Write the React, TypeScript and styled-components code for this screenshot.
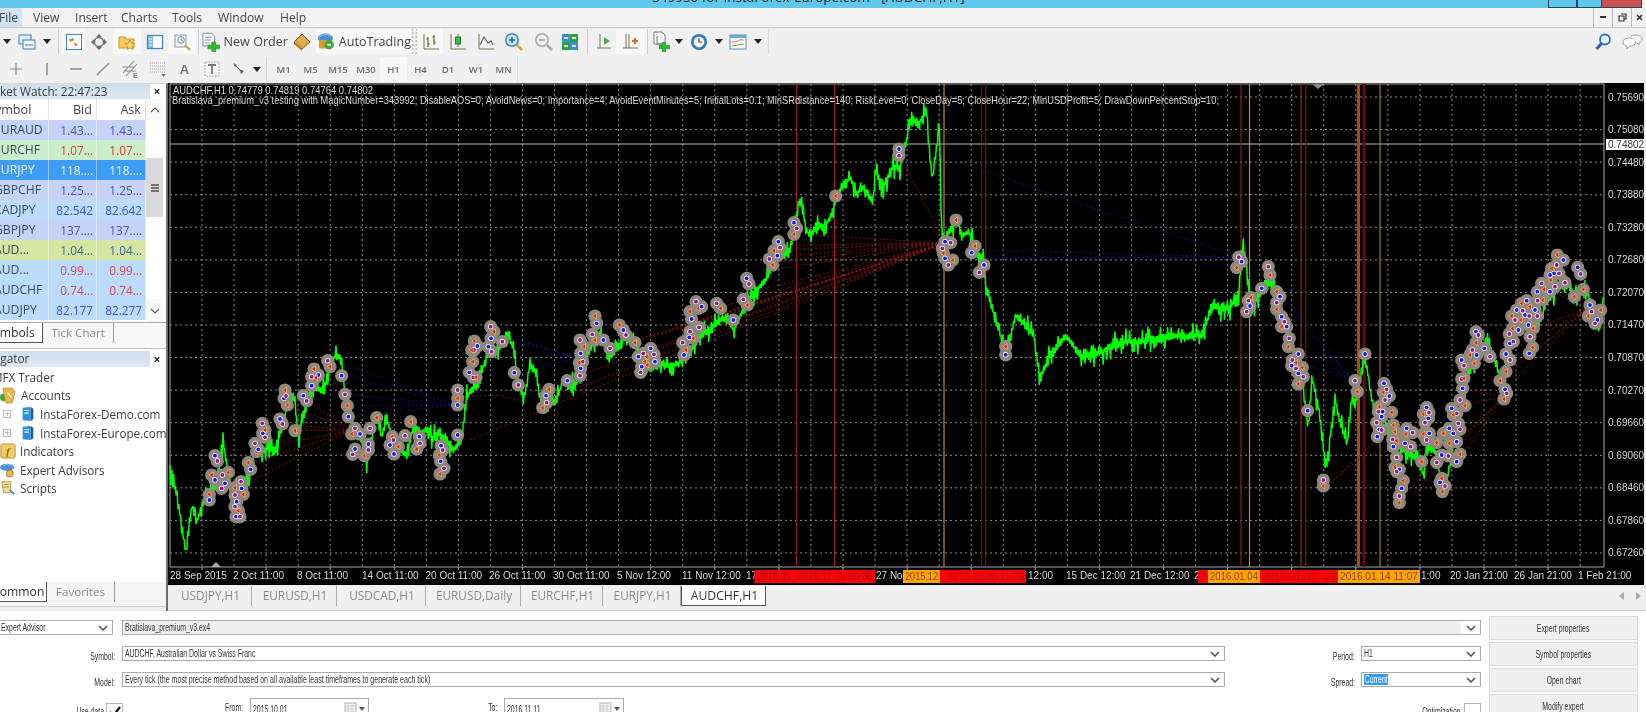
import React from "react";
import styled, { createGlobalStyle } from "styled-components";

const Global = createGlobalStyle`
  html, body { margin: 0; padding: 0; background: #fff; overflow: hidden; }
  #root { width: 1646px; height: 712px; }
  * { box-sizing: border-box; }
`;

const UI = `"Open Sans", "Noto Sans", sans-serif`;
const DLG = `"Liberation Sans", Arial, sans-serif`;

const Page = styled.div`
  width: 1646px; height: 712px; overflow: hidden; display: flex; flex-direction: column;
  font-family: ${UI}; color: #333; background: #f0f0f0; filter: blur(0.45px);
`;

/* ---------- title + menu ---------- */
const TitleBar = styled.div`
  height: 8px; flex: none; background: #5fc8ec; display: flex; overflow: hidden; padding-left: 652px;
`;
const TitleText = styled.div`
  font-size: 13.5px; line-height: 16px; margin-top: -11px; color: #1a1a1a; white-space: nowrap; flex: 1;
`;
const WinBtn = styled.div<{ $w: number; $red?: boolean }>`
  width: ${(p) => p.$w}px; height: 8px; background: ${(p) => (p.$red ? "#c75050" : "#5fc8ec")};
  border: 1px solid #22465a; border-top: none; border-left-width: ${(p) => (p.$red ? 0 : 1)}px;
`;
const WinEdge = styled.div`width: 4px; background: #f4f4f4;`;
const MenuBar = styled.div`
  height: 20px; flex: none; display: flex; align-items: center; font-size: 12.1px; color: #444;
  border-bottom: 1px solid #c6c6c6; background: #f2f2f2;
`;
const MenuItem = styled.div<{ $w: number }>`
  width: ${(p) => p.$w}px; height: 100%; line-height: 19px; white-space: nowrap;
`;
const FileLabel = styled.span`
  display: block; width: 22px; height: 100%; background: #cfe3f5; overflow: hidden; text-indent: -1px;
`;
const MdiGroup = styled.div`margin-left: auto; display: flex; height: 100%;`;
const MdiBtn = styled.div<{ $w: number }>`
  width: ${(p) => p.$w}px; border-right: 1px solid #b8b8b8; display: flex; align-items: center; justify-content: center;
  &:first-child { border-left: 1px solid #b8b8b8; }
  &:last-child { border-right: none; }
`;

/* ---------- toolbars ---------- */
const ToolRow = styled.div<{ $h: number }>`
  height: ${(p) => p.$h}px; flex: none; display: flex; align-items: center; background: #f0f0f0;
`;
const Tool = styled.div<{ $w: number; $on?: boolean }>`
  width: ${(p) => p.$w}px; height: 25px; flex: none; display: flex; align-items: center; justify-content: center;
  background: ${(p) => (p.$on ? "#f8f8f8" : "transparent")};
  font-size: 12.6px; color: #444; gap: 3px; white-space: nowrap;
`;
const Period = styled(Tool)`
  font-size: 9.5px; font-weight: 600; color: #6a6a6a; font-family: ${UI};
`;
const Sep = styled.div<{ $w: number }>`
  width: ${(p) => p.$w}px; height: 25px; flex: none; display: flex; justify-content: center;
  &::after { content: ""; width: 1px; background: #cfcfcf; height: 100%; }
`;
const Grip = styled.div`
  width: 7px; height: 25px; flex: none; margin: 0 0;
  border-left: 2px dotted #c0c0c0; border-right: 2px dotted #c0c0c0; transform: scaleX(.7);
`;
const RowEnd = styled.div`width: 1px; height: 25px; background: #dcdcdc;`;
const RightTools = styled.div`margin-left: auto; display: flex;`;
const DrawA = styled.span`
  font-family: ${DLG}; font-weight: 700; font-size: 13px; color: #777;
`;

/* ---------- main ---------- */
const Main = styled.div`height: 528px; flex: none; display: flex;`;
const Side = styled.div`
  width: 168px; flex: none; background: #fff; display: flex; flex-direction: column; overflow: hidden;
  border-right: 2px solid #6e6e6e; border-top: 1px solid #d8d8d8;
`;
const PanelTitle = styled.div<{ $indent: number; $h: number; $top?: number }>`
  height: ${(p) => p.$h}px; flex: none; display: flex; align-items: center; font-size: 11.8px; color: #3c3c3c; white-space: nowrap; overflow: hidden;
  margin-top: ${(p) => p.$top || 0}px;
  & > span:first-child {
    width: 150px; height: 100%; line-height: ${(p) => p.$h - 1}px; padding-left: 0;
    background: linear-gradient(#cfdfee, #dde8f2); text-indent: ${(p) => p.$indent}px; overflow: hidden;
  }
`;
const CloseX = styled.span`width: 14px; text-align: center; font-weight: 700; font-size: 12px; color: #222;`;
const WatchArea = styled.div`height: 224px; flex: none; display: flex; padding-right: 3px; border-bottom: 1px solid #a8a8a8;`;
const WatchTable = styled.div`width: 146px; flex: none; display: flex; flex-direction: column; overflow: hidden;`;
const WatchHead = styled.div`
  height: 21px; flex: none; display: grid; grid-template-columns: 49px 48px 49px; font-size: 12.6px; color: #444; line-height: 21px;
  span { border-right: 1px solid #e2e2e2; white-space: nowrap; }
  span:first-child { text-indent: -12px; overflow: hidden; }
  span:not(:first-child) { text-align: right; padding-right: 4px; }
`;
const WatchRow = styled.div<{ $bg: string; $fg: string; $sym?: string }>`
  height: 20px; flex: none; display: grid; grid-template-columns: 49px 48px 49px; font-size: 11.8px; line-height: 20px;
  background: ${(p) => p.$bg}; color: ${(p) => p.$fg};
  span { border-right: 1px solid rgba(255,255,255,.45); white-space: nowrap; }
  span:first-child { text-indent: -6px; overflow: hidden; color: ${(p) => p.$sym || "#3a4a5a"}; font-size: 12.2px; }
  span:not(:first-child) { text-align: right; padding-right: 3px; }
`;
const Scroll = styled.div`width: 17px; flex: none; display: flex; flex-direction: column; background: #fff;`;
const ScrollBtn = styled.div<{ $h: number; $end?: boolean }>`
  height: ${(p) => p.$h}px; flex: none; display: flex; align-items: center; justify-content: center; background: #f9f9f9;
  margin-top: ${(p) => (p.$end ? "auto" : "0")};
`;
const ScrollThumb = styled.div`
  height: 59px; margin-top: 38px; flex: none; background: #d9d9d9; display: flex; align-items: center; justify-content: center;
`;
const TabStrip = styled.div<{ $h: number }>`
  height: ${(p) => p.$h}px; flex: none; display: flex; align-items: flex-start; background: #f7f7f7; font-size: 11.6px; overflow: hidden;
  border-bottom: 1px solid #c4c4c4;
`;
const SideTab = styled.div<{ $w: number; $on?: boolean; $indent?: number }>`
  width: ${(p) => p.$w}px; height: 20px; flex: none; line-height: 19px; white-space: nowrap; overflow: hidden;
  text-indent: ${(p) => p.$indent || 0}px;
  text-align: ${(p) => (p.$on ? "left" : "center")};
  background: ${(p) => (p.$on ? "#fff" : "transparent")};
  color: ${(p) => (p.$on ? "#333" : "#8a8a8a")};
  border-right: 1px solid ${(p) => (p.$on ? "#555" : "#9a9a9a")};
  border-bottom: ${(p) => (p.$on ? "1px solid #555" : "none")};
  font-size: ${(p) => (p.$on ? 12.2 : 11.6)}px;
`;
const Tree = styled.div`flex: 1; padding-top: 0.5px; background: #fff; font-size: 11.7px; color: #3c3c3c; overflow: hidden;`;
const TreeRow = styled.div<{ $pad: number }>`
  height: 18.6px; display: flex; align-items: center; padding-left: ${(p) => p.$pad}px; gap: 4px; white-space: nowrap;
  svg { flex: none; }
`;
const TreePlus = styled.span`
  width: 8px; height: 8px; border: 1px solid #bbb; flex: none; margin-right: 5px;
  background: linear-gradient(#bbb,#bbb) center/4px 1px no-repeat, linear-gradient(#bbb,#bbb) center/1px 4px no-repeat;
`;
const BottomTabs = styled(TabStrip)`
  height: 25px; margin-top: 0; border-top: 0; background: #f5f5f5; margin-bottom: 4px; box-shadow: 0 4px 0 #f0f0f0;
  border-bottom: 1px solid #cfcfcf;
`;
const Clip7 = styled.span`margin-left: -8px;`;

const Right = styled.div`flex: 1; display: flex; flex-direction: column; min-width: 0;`;
const ChartBox = styled.div`height: 502px; flex: none; background: #000; display: flex; border-right: 2px solid #f0f0f0;`;
const ChartTabs = styled.div`
  height: 26px; flex: none; display: flex; align-items: flex-start; background: #f0f0f0; color: #8a8a8a;
  padding-top: 1px; border-bottom: 1px solid #c8c8c8;
`;
const ChartTab = styled.div<{ $w: number; $on?: boolean }>`
  width: ${(p) => p.$w}px; height: 20px; line-height: 19px; text-align: center; flex: none; white-space: nowrap; padding-left: 2px;
  background: ${(p) => (p.$on ? "#fff" : "transparent")}; color: ${(p) => (p.$on ? "#333" : "#8a8a8a")};
  border-right: 1px solid ${(p) => (p.$on ? "#555" : "#aaa")};
  border-left: ${(p) => (p.$on ? "1px solid #555" : "none")};
  border-bottom: ${(p) => (p.$on ? "1px solid #555" : "none")};
  font-size: ${(p) => (p.$on ? 12.2 : 11.8)}px;
`;
const TabNav = styled.div`margin-left: auto; display: flex; gap: 12px; padding: 6px 5px 0 0;`;

/* ---------- form ---------- */
const Form = styled.div`
  height: 101px; flex: none; background: #fff; display: grid; overflow: hidden; padding-top: 7px;
  grid-template-columns: 122px 1103px 136px 120px 8px 149px 8px;
  grid-auto-rows: 26px; font-family: ${DLG}; font-size: 10px; color: #333;
`;
const Squeeze = styled.span<{ $end?: boolean; $sx?: number }>`
  display: inline-block; transform: scaleX(${(p) => p.$sx || 0.69}); white-space: nowrap;
  transform-origin: ${(p) => (p.$end ? "right" : "left")} center;
`;
const Label = styled.div<{ $pad?: number }>`
  display: flex; justify-content: flex-end; align-items: center; padding-right: ${(p) => p.$pad ?? 7}px; height: 20px; padding-top: 4px; white-space: nowrap;
`;
const Combo = styled.div<{ $grey?: boolean; $span?: string; $w?: number; $left?: number }>`
  height: 15px; margin-top: 2px; border: 1px solid #aaa; display: flex; align-items: center; padding-left: 2px;
  grid-column: ${(p) => p.$span || "auto"}; background: #fff;
  width: ${(p) => (p.$w ? p.$w + "px" : "auto")};
  margin-left: ${(p) => p.$left || 0}px;
  & > div:first-child { flex: 1; height: 100%; display: flex; align-items: center; background: ${(p) => (p.$grey ? "#efefef" : "transparent")}; min-width: 0; overflow: hidden; margin: 0 0 0 -2px; padding-left: 2px; }
`;
const ChevBox = styled.div`width: 19px; flex: none; display: flex; justify-content: center;`;
const Selected = styled.span`
  background: #3399ff; color: #fff; display: inline-block; padding: 0 1px; transform: scaleX(.69); transform-origin: left center;
`;
const SideButton = styled.div`
  grid-column: 6; height: 24px; margin-top: -2px; background: #f0f0f0; border: 1px solid #dadada;
  display: flex; align-items: center; justify-content: center; font-size: 10px;
`;
const CenterSqueeze = styled.span`
  display: inline-block; transform: scaleX(.69); transform-origin: center; white-space: nowrap;
`;
const DateRow = styled.div`grid-column: 1 / 3; display: flex; align-items: flex-start; height: 26px;`;
const TextLabel = styled.div<{ $w: number; $top?: number }>`
  width: ${(p) => p.$w}px; flex: none; white-space: nowrap; padding-top: ${(p) => p.$top ?? 6}px; text-align: right;
`;
const Check = styled.div<{ $left: number }>`
  width: 17px; height: 17px; flex: none; border: 1px solid #b4b4b4; margin-top: 7px; margin-left: ${(p) => p.$left}px;
  display: flex; align-items: center; justify-content: center;
`;
const DateInput = styled.div<{ $w: number }>`
  width: ${(p) => p.$w}px; height: 22px; flex: none; border: 1px solid #aaa; display: flex; align-items: center; padding-left: 2px; margin: 2px 0 0 7px;
  & > span:first-child { flex: 1; }
`;
const OptCell = styled.div`grid-column: 3 / 5; display: flex; justify-content: flex-end; align-items: flex-start;`;

/* ---------- icons ---------- */
const Svg: React.FC<{ s?: number; children: React.ReactNode; vb?: string }> = ({ s = 18, children, vb = "0 0 18 18" }) => (
  <svg width={s} height={s} viewBox={vb}>{children}</svg>
);
const Drop = () => <svg width="8" height="5" viewBox="0 0 8 5"><path d="M0 0h8L4 5z" fill="#222" /></svg>;
const Chev = () => <svg width="10" height="6" viewBox="0 0 10 6"><path d="M1 1l4 4 4-4" fill="none" stroke="#555" strokeWidth="1.6" /></svg>;
const NewChartIco = () => (
  <Svg><rect x="1" y="2" width="12" height="9" fill="#dcecf8" stroke="#4a7fb0" /><rect x="5" y="7" width="12" height="9" fill="#eef6fc" stroke="#4a7fb0" /><path d="M7 12h8" stroke="#4a7fb0" /></Svg>
);
const MwIco = () => (
  <Svg><rect x="1.5" y="1.5" width="15" height="15" fill="#fff" stroke="#3f86c6" /><path d="M4 5l3 3-2 1zM9 9l4 3-3 1z" fill="#e06a20" /><path d="M5 7l3-2 1 3z" fill="#2aa02a" /></Svg>
);
const NavIco = () => (
  <Svg><path d="M9 1l3 3H6zM9 17l3-3H6zM1 9l3-3v6zM17 9l-3-3v6z" fill="#6f6f6f" /><circle cx="9" cy="9" r="4.6" fill="none" stroke="#6f6f6f" strokeWidth="1.5" /></Svg>
);
const FolderIco = () => (
  <Svg><path d="M1 4h6l1 2h8v9H1z" fill="#f5c95a" stroke="#c79a2a" /><path d="M12 7l1.6 3.2 3.4.5-2.5 2.4.6 3.4-3.1-1.6-3 1.6.6-3.4L7 10.7l3.4-.5z" fill="#f2d66a" stroke="#b08a20" strokeWidth=".7" /></Svg>
);
const PanelIco = () => (
  <Svg><rect x="1.5" y="2.5" width="15" height="13" fill="#fff" stroke="#3f86c6" strokeWidth="1.3" /><rect x="2" y="3" width="5" height="12" fill="#7fb6e4" /><path d="M3 6h3M3 9h3M3 12h3" stroke="#fff" /></Svg>
);
const TesterIco = () => (
  <Svg><rect x="2" y="2" width="11" height="12" fill="#eef2f6" stroke="#8a9cb0" /><circle cx="8" cy="7" r="3.3" fill="#fff" stroke="#6a8aa8" /><path d="M8 5v2l2 1" stroke="#6a8aa8" fill="none" /><path d="M12 12l5 5" stroke="#d8a030" strokeWidth="2.2" /></Svg>
);
const OrderIco = () => (
  <Svg s={20} vb="0 0 20 20"><path d="M2 1h9l3 3v10H2z" fill="#fff" stroke="#7a8a9a" /><path d="M4 5h7M4 8h6M4 11h5" stroke="#7a8a9a" /><path d="M11 10h4v3h4v4h-4v3h-4v-3H7v-4h4z" fill="#2fb52f" stroke="#1a8a1a" strokeWidth=".5" /></Svg>
);
const GoldIco = () => (
  <Svg s={20} vb="0 0 20 20"><path d="M2 10l8-8 8 8-8 7z" fill="#e0a030" stroke="#8a6a30" /><path d="M5 9l5-5 6 6-6 5z" fill="#d8b060" /><path d="M2 10l8 7v2L2 12z" fill="#a87a28" /></Svg>
);
const AutoIco = () => (
  <Svg s={21} vb="0 0 21 21"><ellipse cx="10" cy="7" rx="8" ry="5" fill="#4a8ed0" /><path d="M3 7c2-4 9-5 13-2" stroke="#9ccaf0" fill="none" /><rect x="3" y="9" width="14" height="9" rx="2" fill="#d89a3a" /><circle cx="14" cy="14" r="5" fill="#3aa83a" /><path d="M12 14h4" stroke="#fff" strokeWidth="2" /></Svg>
);
const BarsIco = () => (
  <Svg><path d="M2 1v15h15" fill="none" stroke="#7a6f50" /><path d="M6 4v10M4.5 6H6M6 11h1.5M12 2v10M10.5 4H12M12 9h1.5" stroke="#5a7a30" strokeWidth="1.3" /></Svg>
);
const CandleIco = () => (
  <Svg><path d="M2 1v15h15" fill="none" stroke="#7a6f50" /><path d="M9 1v13" stroke="#666" /><rect x="6.5" y="4" width="5" height="7" fill="#3ac03a" stroke="#2a7a2a" /></Svg>
);
const LineIco = () => (
  <Svg><path d="M2 1v15h15" fill="none" stroke="#7a6f50" /><path d="M3 12l4-8 4 6 3-2 2 4" fill="none" stroke="#5a6a7a" strokeWidth="1.2" /></Svg>
);
const ZoomIco: React.FC<{ plus?: boolean }> = ({ plus }) => (
  <Svg s={20} vb="0 0 20 20">
    <circle cx="8" cy="8" r="6.2" fill={plus ? "#cfe6f8" : "#f0f0f0"} stroke={plus ? "#3f86c6" : "#a8a8a8"} strokeWidth="1.6" />
    <path d="M5 8h6" stroke={plus ? "#2a6fb0" : "#a0a0a0"} strokeWidth="1.6" />
    {plus && <path d="M8 5v6" stroke="#2a6fb0" strokeWidth="1.6" />}
    <path d="M13 13l5 5" stroke={plus ? "#d8a838" : "#a8a8a8"} strokeWidth="2.6" />
  </Svg>
);
const TileIco = () => (
  <Svg><rect x="1" y="1" width="8" height="8" fill="#3d8fd0" /><rect x="9" y="1" width="8" height="8" fill="#2f9f4a" /><rect x="1" y="9" width="8" height="8" fill="#2f9f4a" /><rect x="9" y="9" width="8" height="8" fill="#3d8fd0" /><path d="M3 5h4M11 5h4M3 13h4M11 13h4" stroke="#fff" strokeWidth="1.6" /></Svg>
);
const ShiftIco = () => (
  <Svg><path d="M5 1v14M2 15h14" stroke="#7a6f50" fill="none" /><path d="M9 4l6 4-6 4z" fill="#4ab04a" /></Svg>
);
const ScrollIco = () => (
  <Svg><path d="M4 1v14M7 1v14M1 15h15" stroke="#7a6f50" fill="none" /><path d="M10 8h6M13 5v6" stroke="#e06a20" strokeWidth="2" /></Svg>
);
const NewPlusIco = () => (
  <Svg s={21} vb="0 0 21 21"><path d="M2 1h8l3 3v9H2z" fill="#fff" stroke="#777" /><path d="M5 5v8M5 13h6" stroke="#777" /><path d="M10 11h4v3h4v4h-4v3h-4v-3H7v-4h3z" fill="#2fb52f" /></Svg>
);
const ClockIco = () => (
  <Svg><circle cx="9" cy="9" r="8" fill="#2a78c0" /><circle cx="9" cy="9" r="5.4" fill="#f4f4f4" /><path d="M9 5.5V9h3" stroke="#444" strokeWidth="1.2" fill="none" /></Svg>
);
const TemplateIco = () => (
  <Svg><rect x="1" y="2" width="16" height="14" fill="#fff" stroke="#4a8ac0" /><rect x="1" y="2" width="16" height="3" fill="#6fa8d8" /><path d="M3 10c2-3 4 0 6-2s4-1 6-1" stroke="#d06a30" fill="none" /><path d="M3 13c2-1 4 0 6-1s4 0 6-1" stroke="#50a050" fill="none" /></Svg>
);
const SearchIco = () => (
  <Svg><circle cx="11" cy="6.5" r="5" fill="#e6f1fb" stroke="#2f6fc0" strokeWidth="1.8" /><path d="M7.5 10.5L2.5 16" stroke="#2f5fa8" strokeWidth="3" /></Svg>
);
const ChatIco = () => (
  <Svg s={22} vb="0 0 22 18"><path d="M2 9c0-3 3-4 7-4s6 1 6 4-3 4-6 4l-3 3v-3c-2 0-4-1-4-4z" fill="#f8f8f8" stroke="#a0a0a0" /><path d="M10 3c3-2 11-1 11 3 0 2-1 3-3 4v2l-2-2" fill="#f4f4f4" stroke="#a0a0a0" /></Svg>
);
const LineSym: React.FC<{ d: string; w?: number }> = ({ d, w = 1.2 }) => (
  <Svg><path d={d} stroke="#8a8a8a" strokeWidth={w} fill="none" /></Svg>
);
const FiboIco = () => (
  <Svg s={20} vb="0 0 20 20"><path d="M3 14L14 2M6 17L17 5M2 8h13M4 12h12" stroke="#8a8a8a" strokeWidth="1.1" /><text x="13" y="19" fontSize="7" fontFamily={DLG} fontWeight="700" fill="#777">E</text></Svg>
);
const GridIco = () => (
  <Svg><path d="M1 3h16M1 6h16M1 9h16M1 12h16" stroke="#a0a0a0" strokeDasharray="1 1" /><path d="M12 14h5l-2.500 3z" fill="#777" /></Svg>
);
const ArrowsIco = () => (
  <Svg><path d="M3 3l4 2-2 2zM9 9l5 2-3 3z" fill="#666" /><path d="M6 6l4 4" stroke="#666" /></Svg>
);
const TextIco = () => (
  <Svg><rect x="2" y="2" width="14" height="14" fill="#f6f6f6" stroke="#a8a8a8" strokeDasharray="2 1" /><path d="M5 5h8M9 5v9" stroke="#777" strokeWidth="1.8" /></Svg>
);
const AccountsIco = () => (
  <Svg s={17}><circle cx="4" cy="11" r="4" fill="#3ca83c" /><path d="M3 1h10l3 4-3 12H6z" fill="#e8b94a" stroke="#a8802a" strokeWidth=".6" /><path d="M8 6l4 5" stroke="#fff" strokeWidth="1.4" /></Svg>
);
const ServerIco = () => (
  <Svg s={16}><path d="M3 2l9-1v16l-9-1z" fill="#2f8fdc" /><path d="M12 1l3 2v12l-3 2z" fill="#1a5f9e" /><path d="M5 5h5M5 8h5" stroke="#dff" strokeWidth="1.2" /></Svg>
);
const IndIco = () => (
  <Svg s={16}><rect x="1" y="1" width="16" height="16" rx="2" fill="#f0cd6a" stroke="#b08a2a" /><text x="7" y="14" fontSize="12" fontFamily="Liberation Serif" fontStyle="italic" fontWeight="700" fill="#9a6a10">f</text></Svg>
);
const ExpertIco = () => (
  <Svg s={16}><ellipse cx="8" cy="6" rx="8" ry="4" fill="#4a8ed0" /><path d="M3 5c3-3 8-3 11 0" stroke="#9ccaf0" fill="none" /><circle cx="11" cy="13" r="4" fill="#e8b94a" stroke="#a8802a" /></Svg>
);
const ScriptIco = () => (
  <Svg s={16}><path d="M2 2h10v12H4z" fill="#f3dd9a" stroke="#a8903a" /><path d="M4 5h6M4 8h6" stroke="#a8903a" /><path d="M11 11l5 5" stroke="#5a8ac0" strokeWidth="2" /></Svg>
);
const CalIco = () => (
  <svg width="24" height="14" viewBox="0 0 24 14"><rect x="1" y="1" width="11" height="12" fill="#f4f4f4" stroke="#b4b4b4" /><path d="M1 4h11M1 7h11M1 10h11M4 1v12M8 1v12" stroke="#cfcfcf" /><path d="M15 5h6l-3 4z" fill="#555" /></svg>
);
const CheckMark = () => (
  <svg width="12" height="11" viewBox="0 0 12 11"><path d="M1 6l3 4 7-9" stroke="#111" strokeWidth="2.2" fill="none" /></svg>
);
const GripIco = () => (
  <svg width="8" height="8" viewBox="0 0 8 8"><path d="M0 1h8M0 4h8M0 7h8" stroke="#555" strokeWidth="1.4" /></svg>
);
const Up = () => <svg width="10" height="6" viewBox="0 0 10 6"><path d="M1 5l4-4 4 4" fill="none" stroke="#555" strokeWidth="1.1" /></svg>;
const Down = () => <svg width="10" height="6" viewBox="0 0 10 6"><path d="M1 1l4 4 4-4" fill="none" stroke="#555" strokeWidth="1.1" /></svg>;

/* ---------- chart data (page pixels) ---------- */
const K = 1 / 0.9526;
const ov = (a: number[][]) => a.map(([x, y]) => [x * K, y * K]);
const at = (ox: number, oy: number) => (a: number[][]) => a.map(([x, y]) => [ox + x / 3, oy + y / 3]);
const z9 = at(160, 300);
const z10 = at(700, 90);
const zA = at(1240, 230);
const zB = at(460, 240);

const pathPts: number[][] = [
  [170, 468], [178, 500], [186, 553], [192, 505], [196, 522], [205, 500], [210, 490], [218, 476], [223, 441], [230, 482], [236, 520], [240, 490],
  ...z9([[265, 530], [285, 460], [330, 440], [345, 460], [375, 350], [385, 270], [405, 300], [415, 420], [430, 350], [445, 290], [465, 260], [490, 270], [525, 165], [545, 180], [555, 280], [575, 360], [600, 410], [620, 480], [650, 340], [665, 410], [680, 350], [695, 410], [740, 470], [760, 380], [790, 400], [800, 380], [815, 420], [840, 400], [880, 450]]),
  ...zB([[5, 600], [20, 470], [50, 430], [85, 340], [125, 320], [140, 280], [160, 320], [170, 400], [190, 480], [210, 380], [225, 390], [240, 470], [270, 480], [285, 490], [310, 420], [345, 440], [385, 330], [420, 280], [450, 350], [490, 300], [520, 290], [560, 390], [600, 370], [640, 380], [680, 350], [720, 290], [770, 250], [800, 230], [820, 270], [860, 190], [890, 150]]),
  ...z10([[205, 560], [215, 520], [270, 480], [295, 345], [305, 330], [315, 410], [330, 440], [350, 400], [375, 415], [400, 355], [410, 320], [430, 285], [450, 265], [470, 310], [490, 290], [520, 340], [525, 245], [550, 290], [580, 230], [600, 235], [620, 150], [635, 70], [650, 110], [680, 60], [690, 210], [698, 260], [718, 110], [723, 350], [728, 460], [770, 390], [785, 440], [805, 425], [825, 470], [850, 510], [858, 590]]),
  ...ov([[950, 310], [958, 335], [968, 300], [985, 320], [990, 360], [1000, 340], [1015, 320], [1030, 340], [1050, 335], [1070, 325], [1090, 325], [1120, 320], [1145, 320], [1155, 290], [1170, 295], [1180, 280]]),
  ...zA([[10, 30], [25, 160], [30, 250], [60, 190], [80, 150], [100, 160], [125, 250], [150, 320], [175, 400], [190, 480], [205, 600], [215, 440], [235, 530], [250, 650], [258, 720], [272, 610], [285, 500], [300, 580], [322, 640], [335, 500], [345, 530], [375, 380], [395, 500], [415, 620], [430, 560], [455, 620], [490, 660], [530, 680], [550, 730], [560, 640], [590, 670], [610, 800], [630, 700], [650, 600], [670, 480], [700, 400], [745, 330], [770, 410], [790, 460], [810, 320], [860, 270], [900, 280], [920, 220], [950, 170], [985, 165], [1000, 200], [1040, 180], [1060, 230], [1078, 310], [1092, 210]]),
];

let seed = 12345;
const rnd = () => { seed = (seed * 1103515245 + 12345) & 0x7fffffff; return seed / 0x7fffffff; };
const buildLine = () => {
  const out: string[] = [];
  let sign = 1;
  for (let i = 0; i < pathPts.length - 1; i++) {
    const [x0, y0] = pathPts[i]; const [x1, y1] = pathPts[i + 1];
    const n = Math.max(1, Math.round((x1 - x0) / 0.9));
    for (let j = 0; j < n; j++) {
      const t = j / n;
      const x = x0 + (x1 - x0) * t; const y = y0 + (y1 - y0) * t;
      sign = -sign;
      const a = sign * (1 + rnd() * 3 + Math.pow(rnd(), 4) * 11);
      out.push(`${x.toFixed(1)},${(y + a).toFixed(1)}`);
    }
  }
  return out.join(" ");
};
const lineStr = buildLine();

const markers: number[][] = [
  ...z9([[165, 467], [172, 483], [155, 525], [165, 540], [187, 525], [205, 517], [195, 550], [185, 565], [148, 583], [148, 600], [243, 545], [225, 563], [245, 565], [225, 585], [250, 583], [230, 605], [225, 620], [235, 632], [228, 650], [240, 650], [265, 488], [272, 508], [285, 430], [290, 455], [295, 448], [307, 370], [315, 390], [308, 400], [315, 412], [375, 270], [372, 295], [378, 288], [382, 315], [360, 357], [367, 372], [405, 392], [430, 287], [440, 303], [462, 207], [475, 225], [455, 230], [468, 233], [455, 257], [503, 182], [510, 200], [545, 227], [555, 283], [562, 317], [565, 350], [585, 385], [575, 402], [600, 402], [630, 385], [650, 353], [585, 447], [578, 463], [613, 467], [625, 432], [625, 450], [697, 410], [690, 435], [700, 420], [715, 440], [702, 462], [735, 407], [752, 365], [778, 410], [780, 430], [770, 447], [843, 437], [848, 450], [838, 465], [842, 484], [852, 505], [840, 522], [893, 405], [893, 270], [893, 295], [893, 315]]),
  ...zB([[92, 260], [102, 275], [93, 295], [127, 305], [43, 303], [52, 318], [42, 330], [35, 330], [85, 320], [95, 335], [38, 365], [28, 397], [40, 412], [48, 412], [163, 398], [175, 435], [267, 448], [258, 467], [260, 488], [248, 503], [322, 422], [360, 300], [372, 320], [362, 340], [368, 365], [358, 368], [362, 385], [360, 407], [405, 228], [410, 250], [397, 283], [405, 300], [430, 300], [450, 325], [478, 255], [490, 270], [498, 285], [525, 308], [535, 350], [550, 340], [560, 350], [572, 325], [582, 343], [555, 365], [545, 380], [542, 397], [562, 375], [585, 365], [668, 308], [678, 330], [672, 345], [690, 275], [700, 295], [688, 292], [717, 262], [690, 215], [695, 237], [708, 185], [715, 205], [725, 200], [770, 190], [782, 205], [820, 240], [850, 178], [862, 195]]),
  ...z10([[597, 177], [597, 197], [407, 318], [282, 398], [290, 415], [282, 433], [235, 455], [240, 473], [222, 482], [232, 497], [208, 507], [218, 525], [140, 565], [147, 582], [768, 390], [735, 455], [752, 458], [825, 468], [815, 488], [727, 475], [730, 490], [735, 505], [745, 525], [758, 510], [852, 525], [838, 547]]),
  ...ov([[958, 330], [958, 338], [1180, 245], [1178, 255]]),
  ...zA([[5, 95], [85, 110], [90, 135], [65, 175], [25, 212], [33, 203], [30, 228], [20, 245], [110, 185], [120, 200], [110, 218], [110, 238], [125, 260], [133, 275], [125, 290], [140, 290], [148, 325], [145, 350], [175, 372], [157, 390], [168, 398], [155, 407], [168, 415], [187, 412], [175, 430], [190, 440], [175, 462], [203, 542], [250, 750], [250, 768], [375, 372], [345, 452], [352, 485], [432, 460], [440, 478], [430, 487], [448, 498], [435, 510], [418, 530], [428, 545], [415, 545], [455, 547], [425, 560], [410, 578], [460, 585], [418, 598], [425, 600], [465, 605], [412, 620], [458, 628], [470, 632], [460, 650], [470, 682], [465, 712], [478, 718], [470, 725], [490, 752], [485, 775], [478, 798], [478, 818], [500, 595], [518, 608], [497, 612], [495, 640], [512, 650], [545, 695], [560, 532], [567, 548], [550, 552], [565, 565], [555, 578], [550, 612], [568, 610], [560, 630], [590, 638], [605, 675], [590, 697], [605, 745], [600, 757], [615, 768], [607, 785], [635, 535], [650, 550], [640, 555], [628, 595], [655, 580], [610, 610], [640, 610], [660, 598], [628, 640], [650, 635], [625, 678], [660, 672], [650, 695], [660, 510], [675, 527], [668, 475], [665, 447], [672, 445], [665, 390], [697, 360], [690, 375], [710, 375], [672, 407], [703, 400], [708, 305], [715, 315], [708, 338], [733, 355], [750, 380], [780, 452], [795, 478], [800, 490], [792, 507], [798, 372], [810, 390], [798, 425], [810, 340], [808, 312], [818, 295], [835, 300], [820, 335], [815, 258], [830, 240], [848, 242], [845, 220], [860, 212], [825, 270], [842, 270], [855, 255], [868, 258], [870, 230], [885, 240], [892, 258], [880, 295], [865, 285], [870, 320], [878, 352], [868, 370], [893, 212], [908, 210], [892, 185], [905, 160], [912, 178], [930, 185], [945, 170], [932, 150], [942, 130], [957, 130], [935, 115], [930, 135], [950, 105], [952, 75], [970, 90], [975, 158], [1003, 200], [1013, 112], [1022, 132], [1030, 178], [1050, 225], [1055, 245], [1045, 258], [1072, 270], [1065, 280], [1082, 240]]),
];

const fan = (o: number[], ts: number[][]) => ts.map((t) => [o[0], o[1], t[0], t[1]]);
const redFans = [
  ...fan([352, 430], z9([[270, 545], [275, 490], [300, 445], [380, 315], [440, 305], [510, 200], [370, 372], [415, 392]])),
  ...fan([945, 243], [[810, 235], [795, 245], [780, 250], [770, 257], [770, 270], [775, 262], [620, 345], [640, 340], [660, 335], [700, 320], [740, 295], [905, 165], [710, 310], [680, 330], [638, 357], [540, 403], [470, 440], [525, 395]]),
  ...fan([1585, 310], [[1557, 293], [1537, 327], [1533, 340], [1527, 357], [1510, 372], [1500, 395]]),
  ...fan([1503, 397], [[1470, 390], [1465, 405], [1470, 430], [1463, 455], [1413, 495], [1425, 475]]),
  ...fan([1330, 483], [[1380, 437], [1370, 450]]),
  ...fan([498, 395], zB([[0, 470], [180, 480]])),
];
const blueFans = [
  ...fan([458, 405], z9([[545, 190], [545, 227], [555, 283], [562, 317], [565, 350]])),
  ...fan([1240, 257], [[985, 258], [965, 165], [975, 250], [1000, 258]]),
  ...fan([1353, 380], [[1283, 297], [1290, 310], [1297, 330], [1303, 353], [1303, 363]]),
  ...fan([580, 358], [[503, 337], [517, 340], [547, 353], [513, 373]]),
  ...fan([673, 348], [[640, 348]]),
];
const vLines: [number, string, number][] = [
  [796.7, "#a02020", 1.2], [834.7, "#b02020", 1.2], [944, "#c08a20", 1.2], [981.7, "#6a1010", 1.2], [985.7, "#7a1010", 1.2],
  [1241, "#8a2010", 1.2], [1249.5, "#c08a20", 1.2], [1301, "#a02020", 1.2], [1305.700, "#6a1010", 1.4], [1358.500, "#a84a14", 3], [1364, "#5a1010", 3], [1380, "#9a7a20", 1.2],
];
const priceLabels = ["0.75690", "0.75080", "0.74480", "0.73880", "0.73280", "0.72680", "0.72070", "0.71470", "0.70870", "0.70270", "0.69660", "0.69060", "0.68460", "0.67860", "0.67260"];
const dateLabels: [number, string][] = [
  [170, "28 Sep 2015"], [233, "2 Oct 11:00"], [297, "8 Oct 11:00"], [362, "14 Oct 11:00"], [425.5, "20 Oct 11:00"], [489, "26 Oct 11:00"], [553, "30 Oct 11:00"], [617, "5 Nov 12:00"], [682, "11 Nov 12:00"], [746, "17"], [876, "27 Nov"], [1028, "12:00"], [1066, "15 Dec 12:00"], [1130, "21 Dec 12:00"], [1194, "2"], [1421, "1:00"], [1450, "20 Jan 21:00"], [1514, "26 Jan 21:00"], [1578, "1 Feb 21:00"],
];
const boxes: [number, number, string, string, string][] = [
  [754.5, 120.5, "#ff0000", "#a80808", "2015.11  2015.11.25 00:38"],
  [903, 37, "#ffa500", "#904000", "2015.12"],
  [940, 86, "#ff0000", "#a80808", "  2015.12.08 11:29"],
  [1198, 10, "#ff0000", "#a80808", "2"],
  [1208, 52, "#ffa500", "#904000", "2016.01.04"],
  [1260, 58, "#ff0000", "#a80808", "2016.01.07"],
  [1318, 20, "#ff0000", "#a80808", "  20"],
  [1338, 82, "#ffa500", "#904000", "2016.01.14 11:07"],
];

const PX0 = 170, PX1 = 1604, PY0 = 84, PY1 = 567;
const gridX: number[] = []; for (let x = 202; x < PX1; x += 32.05) gridX.push(x);
const gridY = priceLabels.map((_, i) => 97 + 32.57 * i);

const ChartSvg = () => (
  <svg width="1476" height="502" viewBox="168 83 1476 502" fontFamily={DLG} fontSize="10">
    <rect x="168" y="83" width="1476" height="502" fill="#000" />
    <g stroke="#8c8c8c" strokeWidth="1" strokeDasharray="2 3">
      {gridX.map((x) => <line key={x} x1={x} y1={PY0} x2={x} y2={PY1} />)}
      {gridY.map((y) => <line key={y} x1={PX0} y1={y} x2={PX1} y2={y} />)}
    </g>
    <rect x={PX0} y={PY0} width={PX1 - PX0} height={PY1 - PY0} fill="none" stroke="#a8a8a8" />
    <line x1={PX0} y1="144" x2={PX1} y2="144" stroke="#b8b8b8" />
    {vLines.map(([x, c, w]) => <line key={x} x1={x} y1={PY0} x2={x} y2={PY1} stroke={c} strokeWidth={w} />)}
    <g strokeWidth=".9" strokeDasharray="2 2" fill="none">
      {blueFans.map((l, i) => <line key={i} x1={l[0]} y1={l[1]} x2={l[2]} y2={l[3]} stroke="#10107a" />)}
      {redFans.map((l, i) => <line key={i} x1={l[0]} y1={l[1]} x2={l[2]} y2={l[3]} stroke="#8a1010" />)}
    </g>
    <polyline points={lineStr} fill="none" stroke="#00ff00" strokeWidth="1.5" strokeLinejoin="bevel" />
    <g>{markers.map((m, i) => <circle key={i} cx={m[0]} cy={m[1]} r="6.6" fill="#8f877b" />)}</g>
    <g>
      {markers.map((m, i) => {
        const k = i % 3;
        const [x, y] = m;
        if (k === 2) return <path key={i} d={`M${x - 2.500} ${y}l4-3v6z`} fill="#e02010" stroke="#f8e080" strokeWidth=".6" />;
        return (
          <g key={i}>
            <circle cx={x} cy={y} r="2.7" fill="#f4f4f4" />
            <circle cx={x} cy={y} r="1.9" fill={k === 0 ? "#1414f0" : "#8a1a8a"} />
          </g>
        );
      })}
    </g>
    <path d="M211 567l5-5 5 5z" fill="#a8a8b8" />
    <path d="M1312 84h12l-6 5z" fill="#8a8a9a" />
    {gridX.filter((_, i) => i % 2 === 0).map((x) => <line key={x} x1={x} y1={PY1} x2={x} y2={PY1 + 3} stroke="#a8a8a8" />)}
    <g fill="#d8d8d8">
      <text x="173" y="94" fontSize="10.2" textLength="200" lengthAdjust="spacingAndGlyphs">AUDCHF,H1  0.74779 0.74819 0.74764 0.74802</text>
      <text x="172" y="104" fontSize="10.2" textLength="1047" lengthAdjust="spacingAndGlyphs">Bratislava_premium_v3 testing with MagicNumber=343992; DisableAOS=0; AvoidNews=0; Importance=4; AvoidEventMinutes=5; InitialLots=0.1; MinSRdistance=140; RiskLevel=0; CloseDay=5; CloseHour=22; MinUSDProfit=5; DrawDownPercentStop=10;</text>
      {priceLabels.map((t, i) => <text key={t} x="1608" y={gridY[i] + 3.5} fontSize="10">{t}</text>)}
      {dateLabels.map(([x, t]) => <text key={t} x={x} y="579" fontSize="10">{t}</text>)}
    </g>
    <rect x="1606" y="139" width="38" height="11" fill="#fff" />
    <text x="1608" y="148" fontSize="10" fill="#333">0.74802</text>
    {boxes.map(([x, w, bg, fg, t]) => (
      <g key={t + x}>
        <rect x={x} y="570" width={w} height="13" fill={bg} />
        <text x={x + 2} y="579.500" fontSize="10" fill={fg} xmlSpace="preserve" {...(t.length > 6 ? { textLength: w - 4, lengthAdjust: "spacingAndGlyphs" as const } : {})}>{t}</text>
      </g>
    ))}
  </svg>
);

type Row = { sym: string; bid: string; ask: string; bg: string; fg: string; symFg?: string };
const B = "#3f4fd8", R = "#e2405a";
const rows: Row[] = [
  { sym: "EURAUD", bid: "1.43...", ask: "1.43...", bg: "#c6d3f6", fg: B },
  { sym: "EURCHF", bid: "1.07...", ask: "1.07...", bg: "#cbeeca", fg: "#e03a30" },
  { sym: "EURJPY", bid: "118....", ask: "118....", bg: "#3d9cf6", fg: "#e8f4ff", symFg: "#e8f4ff" },
  { sym: "GBPCHF", bid: "1.25...", ask: "1.25...", bg: "#c6d3f6", fg: B },
  { sym: "CADJPY", bid: "82.542", ask: "82.642", bg: "#bbdcfb", fg: B },
  { sym: "GBPJPY", bid: "137....", ask: "137....", bg: "#c6d3f6", fg: B },
  { sym: "AUD...", bid: "1.04...", ask: "1.04...", bg: "#d4e6a2", fg: "#3d6a8a" },
  { sym: "AUD...", bid: "0.99...", ask: "0.99...", bg: "#bbdcfb", fg: R },
  { sym: "AUDCHF", bid: "0.74...", ask: "0.74...", bg: "#bbdcfb", fg: R },
  { sym: "AUDJPY", bid: "82.177", ask: "82.277", bg: "#bbdcfb", fg: B },
];

const tabs: [string, number][] = [["USDJPY,H1", 84], ["EURUSD,H1", 85], ["USDCAD,H1", 89], ["EURUSD,Daily", 95], ["EURCHF,H1", 82], ["EURJPY,H1", 78]];

export default function App() {
  return (
    <Page>
      <Global />
      <TitleBar>
        <TitleText>349950 for InstaForex-Europe.com - [AUDCHF,H1]</TitleText>
        <WinBtn $w={29} /><WinBtn $w={25} /><WinBtn $w={40} $red /><WinEdge />
      </TitleBar>
      <MenuBar>
        <MenuItem $w={33}><FileLabel>File</FileLabel></MenuItem>
        <MenuItem $w={42}>View</MenuItem>
        <MenuItem $w={46}>Insert</MenuItem>
        <MenuItem $w={51}>Charts</MenuItem>
        <MenuItem $w={46}>Tools</MenuItem>
        <MenuItem $w={62}>Window</MenuItem>
        <MenuItem $w={40}>Help</MenuItem>
        <MdiGroup>
          <MdiBtn $w={20}><svg width="6" height="3"><rect width="6" height="2" fill="#333" /></svg></MdiBtn>
          <MdiBtn $w={19}><svg width="9" height="9" viewBox="0 0 9 9"><path d="M3 1h5v5H6M1 3h5v5H1z" fill="none" stroke="#333" strokeWidth="1.2" /></svg></MdiBtn>
          <MdiBtn $w={14}><svg width="7" height="7" viewBox="0 0 7 7"><path d="M1 1l5 5M6 1L1 6" stroke="#333" strokeWidth="1.6" /></svg></MdiBtn>
        </MdiGroup>
      </MenuBar>
      <ToolRow $h={27}>
        <Tool $w={14}><Drop /></Tool>
        <Tool $w={26}><NewChartIco /></Tool>
        <Tool $w={14}><Drop /></Tool>
        <Sep $w={8} />
        <Tool $w={23} $on><MwIco /></Tool>
        <Tool $w={28}><NavIco /></Tool>
        <Tool $w={28} $on><FolderIco /></Tool>
        <Tool $w={27}><PanelIco /></Tool>
        <Tool $w={27} $on><TesterIco /></Tool>
        <Sep $w={6} />
        <Tool $w={87}><OrderIco />New Order</Tool>
        <Tool $w={28}><GoldIco /></Tool>
        <Tool $w={95} $on><AutoIco />AutoTrading</Tool>
        <Grip />
        <Tool $w={25} $on><BarsIco /></Tool>
        <Tool $w={30}><CandleIco /></Tool>
        <Tool $w={25}><LineIco /></Tool>
        <Tool $w={32}><ZoomIco plus /></Tool>
        <Tool $w={27}><ZoomIco /></Tool>
        <Tool $w={26}><TileIco /></Tool>
        <Sep $w={8} />
        <Tool $w={25}><ShiftIco /></Tool>
        <Tool $w={29} $on><ScrollIco /></Tool>
        <Sep $w={5} />
        <Tool $w={24}><NewPlusIco /></Tool>
        <Tool $w={10}><Drop /></Tool>
        <Tool $w={30}><ClockIco /></Tool>
        <Tool $w={10}><Drop /></Tool>
        <Tool $w={28}><TemplateIco /></Tool>
        <Tool $w={12}><Drop /></Tool>
        <Tool $w={4} />
        <RowEnd />
        <RightTools>
          <Tool $w={30}><SearchIco /></Tool>
          <Tool $w={28}><ChatIco /></Tool>
        </RightTools>
      </ToolRow>
      <ToolRow $h={28}>
        <Tool $w={32}><LineSym d="M9 3v12M3 9h12" /></Tool>
        <Sep $w={0} />
        <Tool $w={30}><LineSym d="M9 3v12" w={1.5} /></Tool>
        <Tool $w={27}><LineSym d="M3 9h12" w={1.5} /></Tool>
        <Tool $w={27}><LineSym d="M3 15L15 3" w={1.5} /></Tool>
        <Tool $w={28}><FiboIco /></Tool>
        <Tool $w={27}><GridIco /></Tool>
        <Tool $w={27}><DrawA>A</DrawA></Tool>
        <Tool $w={28}><TextIco /></Tool>
        <Tool $w={26}><ArrowsIco /></Tool>
        <Tool $w={10}><Drop /></Tool>
        <Sep $w={8} />
        {["M1", "M5", "M15", "M30"].map((t, i) => <Period key={t} $w={i < 2 ? 27 : 28}>{t}</Period>)}
        <Period $w={27} $on>H1</Period>
        <Period $w={27}>H4</Period>
        <Period $w={28}>D1</Period>
        <Period $w={28}>W1</Period>
        <Period $w={27}>MN</Period>
        <RowEnd />
      </ToolRow>
      <Main>
        <Side>
          <PanelTitle $indent={-22} $h={15}><span>Market Watch: 22:47:23</span><CloseX>×</CloseX></PanelTitle>
          <WatchArea>
            <WatchTable>
              <WatchHead><span>Symbol</span><span>Bid</span><span>Ask</span></WatchHead>
              {rows.map((r, i) => (
                <WatchRow key={i} $bg={r.bg} $fg={r.fg} $sym={r.symFg}><span>{r.sym}</span><span>{r.bid}</span><span>{r.ask}</span></WatchRow>
              ))}
            </WatchTable>
            <Scroll>
              <ScrollBtn $h={21}><Up /></ScrollBtn>
              <ScrollThumb><GripIco /></ScrollThumb>
              <ScrollBtn $h={23} $end><Down /></ScrollBtn>
            </Scroll>
          </WatchArea>
          <TabStrip $h={26}>
            <SideTab $w={43} $on $indent={-13}>Symbols</SideTab>
            <SideTab $w={71}>Tick Chart</SideTab>
          </TabStrip>
          <PanelTitle $indent={-24} $h={16} $top={2}><span>Navigator</span><CloseX>×</CloseX></PanelTitle>
          <Tree>
            <TreeRow $pad={0}><Clip7>MFX Trader</Clip7></TreeRow>
            <TreeRow $pad={0}><AccountsIco />Accounts</TreeRow>
            <TreeRow $pad={3}><TreePlus /><ServerIco />InstaForex-Demo.com</TreeRow>
            <TreeRow $pad={3}><TreePlus /><ServerIco />InstaForex-Europe.com</TreeRow>
            <TreeRow $pad={0}><IndIco />Indicators</TreeRow>
            <TreeRow $pad={0}><ExpertIco />Expert Advisors</TreeRow>
            <TreeRow $pad={0}><ScriptIco />Scripts</TreeRow>
          </Tree>
          <BottomTabs $h={25}>
            <SideTab $w={47} $on $indent={-8}>Common</SideTab>
            <SideTab $w={68}>Favorites</SideTab>
          </BottomTabs>
        </Side>
        <Right>
          <ChartBox><ChartSvg /></ChartBox>
          <ChartTabs>
            {tabs.map(([t, w]) => <ChartTab key={t} $w={w}>{t}</ChartTab>)}
            <ChartTab $w={85} $on>AUDCHF,H1</ChartTab>
            <TabNav>
              <svg width="5" height="8"><path d="M5 0v8L0 4z" fill="#aaa" /></svg>
              <svg width="5" height="8"><path d="M0 0v8l5-4z" fill="#aaa" /></svg>
            </TabNav>
          </ChartTabs>
        </Right>
      </Main>
      <Form>
        <Combo $w={115} $left={-2}><div><Squeeze>Expert Advisor</Squeeze></div><ChevBox><Chev /></ChevBox></Combo>
        <Combo $span="2 / 5" $grey><div><Squeeze>Bratislava_premium_v3.ex4</Squeeze></div><ChevBox><Chev /></ChevBox></Combo>
        <div />
        <SideButton><CenterSqueeze>Expert properties</CenterSqueeze></SideButton>
        <div />

        <Label><Squeeze $end>Symbol:</Squeeze></Label>
        <Combo><div><Squeeze>AUDCHF, Australian Dollar vs Swiss Franc</Squeeze></div><ChevBox><Chev /></ChevBox></Combo>
        <Label $pad={6}><Squeeze $end>Period:</Squeeze></Label>
        <Combo><div><Squeeze>H1</Squeeze></div><ChevBox><Chev /></ChevBox></Combo>
        <div />
        <SideButton><CenterSqueeze>Symbol properties</CenterSqueeze></SideButton>
        <div />

        <Label><Squeeze $end>Model:</Squeeze></Label>
        <Combo><div><Squeeze $sx={0.705}>Every tick (the most precise method based on all available least timeframes to generate each tick)</Squeeze></div><ChevBox><Chev /></ChevBox></Combo>
        <Label $pad={6}><Squeeze $end>Spread:</Squeeze></Label>
        <Combo><div><Selected>Current</Selected></div><ChevBox><Chev /></ChevBox></Combo>
        <div />
        <SideButton><CenterSqueeze>Open chart</CenterSqueeze></SideButton>
        <div />

        <DateRow>
          <TextLabel $w={104} $top={10}><Squeeze $end>Use data</Squeeze></TextLabel>
          <Check $left={2}><CheckMark /></Check>
          <TextLabel $w={120}><Squeeze $end>From:</Squeeze></TextLabel>
          <DateInput $w={119}><span><Squeeze>2015.10.01</Squeeze></span><CalIco /></DateInput>
          <TextLabel $w={128}><Squeeze $end>To:</Squeeze></TextLabel>
          <DateInput $w={120}><span><Squeeze>2016.11.11</Squeeze></span><CalIco /></DateInput>
        </DateRow>
        <OptCell>
          <TextLabel $w={80} $top={10}><Squeeze $end>Optimization</Squeeze></TextLabel>
          <Check $left={3} />
        </OptCell>
        <div />
        <SideButton><CenterSqueeze>Modify expert</CenterSqueeze></SideButton>
        <div />
      </Form>
    </Page>
  );
}
